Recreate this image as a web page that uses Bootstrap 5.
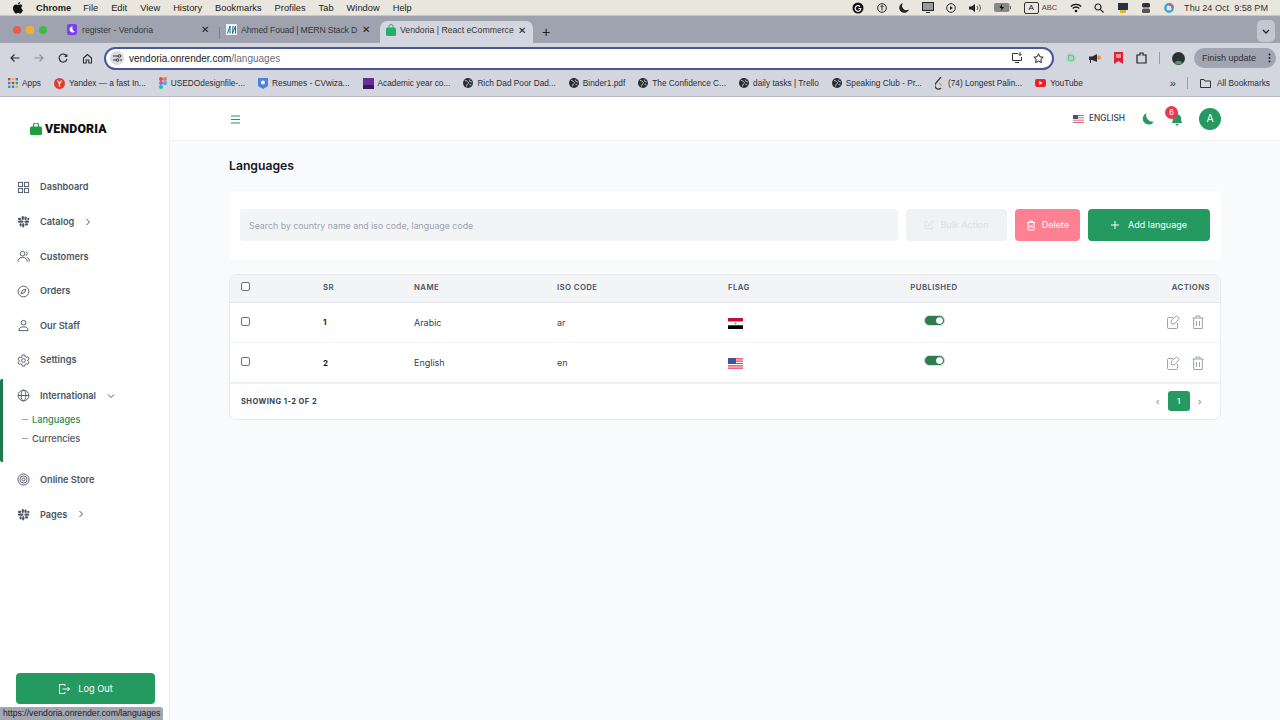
<!DOCTYPE html>
<html lang="en">
<head>
<meta charset="utf-8">
<title>Vendoria | React eCommerce</title>
<link href="https://cdn.jsdelivr.net/npm/bootstrap@5.3.0/dist/css/bootstrap.min.css" rel="stylesheet">
<style>
html,body{height:720px;overflow:hidden}
body{font-family:"Inter","Liberation Sans",sans-serif;background:#f9fafb;color:#111827;position:relative}
svg{display:block;flex:none}
.mac-bar{height:16px;background:#e9e7dd;font:9.3px "Liberation Sans",sans-serif;color:#222;padding:0 12px 0 13px;border-bottom:1px solid #c9c8c0}
.mac-menu{gap:13px;margin-left:13px}
.mac-menu b{margin-right:-1px}
.mac-status{gap:12.5px}
.mac-clock{font-size:9.1px;color:#333;margin-left:-2px}
.tab-strip{height:27px;background:#9fa3af;font:8.7px "Liberation Sans",sans-serif;color:#33363c;padding-top:5px}
.lights{gap:5px;padding:0 0 0 13px;width:61px;align-self:center;margin-top:-4px}
.light{width:8px;height:8px;border-radius:50%}
.chrome-tab{height:22px;padding:0 3px 5px 6px;width:152px}
.chrome-tab.tab-two{width:160px;padding:0 9px 5px 6px}
.chrome-tab.tab-on{background:#d4d6df;border-radius:7px 7px 0 0;width:153px;height:22px;padding:0 6px 4px 6px}
.tab-label{margin-left:5px;white-space:nowrap;overflow:hidden;flex:1}
.tab-two .tab-label{margin-left:4px;letter-spacing:-.15px}
.tab-on .tab-label{margin-left:4px}
.tab-x{font-size:10px;color:#222;margin-left:3px;width:10px;text-align:center}
.tab-sep{width:1px;height:12px;background:#7f838d;margin:0 0 4px 6px}
.tool-row{height:27px;background:#d4d6df;padding:3px 0 0 10px}
.nav-glyphs{gap:14px;width:94px;color:#2c2e33;flex-shrink:0}
.addr{width:950px;height:23px;background:#fff;border:2px solid #4a5796;border-radius:12px;font:10px "Liberation Sans",sans-serif;color:#222;padding:0 6px 0 4px}
.addr-site{width:14px;height:14px;background:#d8dae3;border-radius:50%;margin-right:5px}
.addr span.path{color:#6b6e76}
.ext-row{gap:12px;margin-left:11px;flex:1;min-width:0}
.finish{margin-left:-3px;background:#a0a5b1;border-radius:11px;height:20px;padding:0 5px 0 8px;font:9px "Liberation Sans",sans-serif;color:#2d2f35;width:82px;flex-shrink:0}
.mark-row{height:27px;background:#d4d6df;border-bottom:1px solid #b9bbc4;padding:0 10px 0 8px;font:8.3px "Liberation Sans",sans-serif;color:#2a2c31}
.mark-list{gap:13px}
.mark-item{gap:4px;white-space:nowrap}
.app-shell{height:623px}
.side-panel{width:170px;flex:none;background:#fff;border-right:1px solid #f1f2f4;position:relative}
.logo-wrap{height:64px;padding:0 0 0 30px;margin-bottom:9px}
.logo-text{font-family:"Roboto","Liberation Sans",sans-serif;font-weight:900;font-size:12.3px;letter-spacing:.2px;color:#111;margin-left:3px}
.side-link{height:34.6px;padding-left:17px;font-size:9.2px;font-weight:600;color:#4b5563;gap:10px;text-decoration:none}
.side-link svg.side-ico{width:13px;height:13px}
.side-link.has-arrow{gap:0}
.side-link.has-arrow span{margin:0 11px 0 10px}
.side-group{border-left:3px solid #1c7a4d;border-radius:2px;margin:1px 0 1px;height:83px}
.side-group .side-link{padding-left:14px}
.sub-list{margin-top:-3px}
.sub-link{font-size:9.2px;font-weight:500;color:#4b5563;padding-left:19px;height:19px;gap:4px}
.sub-link.on{color:#1f8a55}
.sub-dash{width:6px;height:1px;background:#9ca3af}
.side-foot{margin-top:auto;padding:0 15px 16px 16px}
.logout-btn{height:31px;width:139px;background:#249a60;border:0;color:#fff;font-size:9.2px;font-weight:400;border-radius:4px;gap:8px}
.main-pane{min-width:0}
.top-strip{height:44px;background:#fff;border-bottom:1px solid #f0f1f3;padding:0 59px 0 60px}
.hamb{margin-top:1px}
.lang-pick{font-size:8.3px;color:#374151;font-weight:500;gap:5px;margin-right:17px}
.moon-ico{margin-top:1px}
.bell-wrap{position:relative;margin:1px 16px 0 17px}
.bell-count{position:absolute;left:-6px;top:-7px;width:13px;height:13px;background:#e8394f;color:#fff;border-radius:50%;font-size:7.5px;font-weight:400;line-height:13px;text-align:center;padding:0}
.avatar-dot{width:22px;height:22px;background:#249a60;color:#fff;border-radius:50%;font-size:10.5px;font-weight:400}
.body-pane{padding:0 59px 0 59px}
.page-title{font-size:12.2px;font-weight:600;margin:0;line-height:16px;padding:17px 0 17px;color:#111827}
.filter-card{height:69px;background:#fff;border-radius:6px;padding:0 11px 1px 11px;gap:8px;margin-bottom:14px}
.filter-input{flex:1;height:32px;background:#f3f4f6;border:0;border-radius:4px;font-size:8.8px;color:#374151;padding:0 9px;box-shadow:none}
.filter-input::placeholder{color:#9ca3af}
.act-btn{height:32px;border-radius:4px;border:0;font-size:9px;font-weight:400;gap:6px;padding:0;color:#fff}
.act-bulk,.act-bulk:disabled{width:101px;background:#f1f2f4;color:#dcdee2;opacity:1}
.act-del{width:65px;background:#fd8093}
.act-add{width:122px;background:#249a60;gap:9px}
.data-box{background:#fff;border:1px solid #e8eaed;border-radius:7px;overflow:hidden;height:146px}
.lang-table{margin:0;table-layout:fixed;width:990px;font-size:9px;color:#374151}
.lang-table th,.lang-table td{vertical-align:middle;padding:0 11px;border-bottom:1px solid #f1f2f4;background:transparent;box-shadow:none}
.lang-table thead th{height:27px;background:#f3f4f6;border-bottom:1px solid #e5e7eb;font-size:7.8px;font-weight:600;letter-spacing:.4px;color:#4b5563;padding-bottom:1px}
.lang-table thead th:last-child{padding-right:10px}
.lang-table tbody td{height:40.5px}
.lang-table tbody tr:last-child td{border-bottom:2px solid #eff0f2}
.lang-table .sr-num{font-weight:700;font-size:8px;color:#111827}
.flag-ico{margin-top:2px}
.mini-check.form-check-input{width:9px;height:9px;margin:0;border:1px solid #6b7280;border-radius:2px;display:block;background-color:#fff;margin-top:-2px}
.mini-switch.form-check-input{width:21px;height:11px;margin:0 auto;display:block;float:none;background-color:#2f7d4f;border-color:#cfe3d6;margin-top:-4px}
.form-switch{padding:0;min-height:0;margin:0}
.form-switch .mini-switch.form-check-input{margin-left:auto}
.row-tools{gap:12px;margin-right:-5px;padding-right:10px}
.table-foot{height:35px;padding:0 10px 1px 11px;font-size:7.5px;font-weight:700;letter-spacing:.45px;color:#374151}
.foot-count{margin-top:2px}
.page-one{width:22px;height:20px;background:#249a60;border-radius:3px;color:#fff;font-size:8px;font-weight:500}
.page-arrow{color:#9ca3af;font-size:9px;width:20px;text-align:center;line-height:1}
.status-tip{position:absolute;left:0;bottom:0;height:13px;width:163px;background:#a3a7b2;border-radius:0 3px 0 0;font:8.7px "Liberation Sans",sans-serif;color:#17181b;padding:0 3px;line-height:13px;white-space:nowrap}
</style>
</head>
<body>
<svg width="0" height="0" style="position:absolute"><defs>
<symbol id="globe" viewBox="0 0 10 10"><circle cx="5" cy="5" r="5" fill="#2a2c31"/><path d="M2 2.500c1.500 0 2 .8 3 1.500s.5 1.500-.5 2-.5 2-1 2.500M7 1.500c-.5 1-1 1.500 0 2s1.800.5 2 .5M6.500 6.500c1-.5 1.500 0 1.500 1" fill="none" stroke="#d4d6df" stroke-width=".9"/></symbol>
<symbol id="slackish" viewBox="0 0 14 14"><g fill="#4b5563"><rect x="5" y="1" width="2.400" height="4.400" rx="1.200"/><rect x="1" y="3" width="3.400" height="2.400" rx="1.200"/><rect x="8" y="1.500" width="2.400" height="3.900" rx="1.200"/><rect x="8" y="6" width="5" height="2.400" rx="1.200"/><rect x="11" y="3" width="2.400" height="2.400" rx="1.200"/><rect x="5.500" y="9" width="2.400" height="4.400" rx="1.200"/><rect x="8.500" y="9" width="3.400" height="2.400" rx="1.200"/><rect x="1" y="6" width="6" height="2.400" rx="1.200"/><rect x="2.800" y="9" width="2.200" height="3.400" rx="1.100"/></g></symbol>
<symbol id="edit-ico" viewBox="0 0 14 14"><path fill="none" stroke="#9ca3af" d="M11.500 8v4.500a1 1 0 0 1-1 1h-8a1 1 0 0 1-1-1v-9a1 1 0 0 1 1-1H7M5 7.500l.5-2.500L10.700.8l2.500 2.500L9 8.500l-3 .5z"/></symbol>
<symbol id="trash-ico" viewBox="0 0 12 14"><path fill="none" stroke="#9ca3af" d="M.5 3h11M4 3V1h4v2M1.700 3v10.500h8.600V3M4.500 6v5M7.500 6v5"/></symbol>
</defs></svg>
<div class="mac-bar d-flex align-items-center justify-content-between">
  <div class="d-flex align-items-center">
    <svg width="10" height="12" viewBox="0 0 10 12"><path fill="#111" d="M7.200 0c.1 1-.9 2.400-2.200 2.400C4.900 1.200 6 .1 7.200 0zM5 3c.6 0 1.300-.5 2.300-.5.800 0 1.700.4 2.200 1.200-1.800 1-1.500 3.600.5 4.300C9.400 9.500 8.400 11.600 7.200 11.600c-.8 0-1-.5-2-.5s-1.300.5-2 .5C1.800 11.600 0 8.800 0 6.300 0 3.900 1.500 2.600 3 2.600c.8 0 1.500.4 2 .4z"/></svg>
    <div class="d-flex mac-menu"><b>Chrome</b><span>File</span><span>Edit</span><span>View</span><span>History</span><span>Bookmarks</span><span>Profiles</span><span>Tab</span><span>Window</span><span>Help</span></div>
  </div>
  <div class="d-flex align-items-center mac-status">
    <svg width="12" height="12" viewBox="0 0 12 12"><circle cx="6" cy="6" r="5.500" fill="#111"/><path d="M8 4.500A2.800 2.800 0 1 0 8.800 6.500H6.500" fill="none" stroke="#fff" stroke-width="1.200"/></svg>
    <svg width="10" height="10" viewBox="0 0 10 10"><circle cx="5" cy="5" r="4.300" fill="none" stroke="#222"/><path d="M5 2.500v5M3.500 4L5 2.500 6.500 4" fill="none" stroke="#222"/></svg>
    <svg width="10" height="10" viewBox="0 0 10 10"><path fill="#222" d="M4 0a5 5 0 1 0 6 6.500A4.500 4.500 0 0 1 4 0z"/></svg>
    <svg width="12" height="11" viewBox="0 0 12 11"><rect x=".5" y=".5" width="11" height="8" fill="#999" stroke="#222"/><path d="M4 10.500h4" stroke="#222"/></svg>
    <svg width="10" height="10" viewBox="0 0 10 10"><circle cx="5" cy="5" r="4.300" fill="none" stroke="#222"/><path d="M4 3l3 2-3 2z" fill="#222"/></svg>
    <svg width="13" height="10" viewBox="0 0 13 10"><path d="M0 3.500h2.500L6 1v8L2.500 6.500H0z" fill="#222"/><path d="M8 3a3 3 0 0 1 0 4M10 1.500a5 5 0 0 1 0 7" fill="none" stroke="#555"/></svg>
    <svg width="17" height="9" viewBox="0 0 17 9"><rect width="15.500" height="9" rx="2" fill="#888"/><rect x="16" y="3" width="1" height="3" fill="#666"/><path d="M8 1L5.500 5h2L7 8l3-4H8z" fill="#111"/></svg>
    <span class="d-flex align-items-center" style="gap:3px;font-size:7.5px;color:#444"><span style="border:1px solid #333;border-radius:2px;width:15px;height:12px;line-height:10px;text-align:center;font-size:8px;color:#111">A</span>ABC</span>
    <svg width="12" height="10" viewBox="0 0 12 10"><path d="M.8 3.500a7.500 7.500 0 0 1 10.400 0M2.700 5.500a5 5 0 0 1 6.600 0" fill="none" stroke="#111" stroke-width="1.300"/><circle cx="6" cy="8" r="1.300" fill="#111"/></svg>
    <svg width="10" height="10" viewBox="0 0 10 10"><circle cx="4" cy="4" r="3" fill="none" stroke="#222" stroke-width="1.200"/><path d="M6.300 6.300L9.500 9.500" stroke="#222" stroke-width="1.200"/></svg>
    <svg width="12" height="12" viewBox="0 0 12 12"><path d="M1 1h10v7H1z" fill="#234"/><path d="M3 8h6v3H3z" fill="#e3b52a"/></svg>
    <svg width="10" height="12" viewBox="0 0 10 12"><rect x="1" y="1" width="8" height="4.500" rx="1.500" fill="#333"/><rect x="1" y="6.500" width="8" height="4.500" rx="1.500" fill="#555"/></svg>
    <svg width="10" height="10" viewBox="0 0 10 10"><circle cx="5" cy="5" r="3.700" fill="none" stroke="#3fa4d8" stroke-width="2.400"/><path d="M5 1.300a3.700 3.700 0 0 1 3.700 3.700" fill="none" stroke="#d64b9f" stroke-width="2.400"/></svg>
    <span class="mac-clock">Thu 24 Oct&nbsp; 9:58 PM</span>
  </div>
</div>

<div class="tab-strip d-flex align-items-end">
  <div class="d-flex lights"><span class="light" style="background:#ee5a52"></span><span class="light" style="background:#f4b22c"></span><span class="light" style="background:#3cbc45"></span></div>
  <div class="chrome-tab d-flex align-items-center">
    <svg width="10" height="11" viewBox="0 0 10 11"><rect width="10" height="11" rx="2" fill="#7b3ff2"/><path d="M5.800 2.500a3 3 0 1 0 2 5 3.500 3.500 0 0 1-2-5z" fill="#fff"/></svg>
    <span class="tab-label">register - Vendoria</span><span class="tab-x">✕</span>
  </div>
  <div class="tab-sep"></div>
  <div class="chrome-tab tab-two d-flex align-items-center">
    <svg width="11" height="11" viewBox="0 0 11 11"><rect width="11" height="11" fill="#eef3f5"/><path d="M1.500 9.500L4 2v7.500M7 2l-.5 7.500L9.500 2v7.500" fill="none" stroke="#27708f"/></svg>
    <span class="tab-label">Ahmed Fouad | MERN Stack D</span><span class="tab-x">✕</span>
  </div>
  <div class="chrome-tab tab-on d-flex align-items-center">
    <svg width="10" height="12" viewBox="0 0 10 12"><path d="M3 4V2.500a2 2 0 0 1 4 0V4" fill="none" stroke="#25b06a"/><rect y="3.500" width="10" height="8.500" rx="1.500" fill="#25b06a"/></svg>
    <span class="tab-label">Vendoria | React eCommerce</span><span class="tab-x">✕</span>
  </div>
  <span style="font-size:14px;line-height:14px;margin:0 0 4px 9px;color:#222">+</span>
  <span class="d-flex align-items-center justify-content-center ms-auto" style="width:18px;height:22px;background:#c4c7d1;border-radius:5px;margin:0 5px 1px 0"><svg width="8" height="5" viewBox="0 0 8 5"><path d="M1 1l3 3 3-3" fill="none" stroke="#222" stroke-width="1.300"/></svg></span>
</div>

<div class="tool-row d-flex align-items-center">
  <div class="d-flex align-items-center nav-glyphs">
    <svg width="10" height="10" viewBox="0 0 10 10"><path d="M9.500 5H1M4.500 1.500L1 5l3.500 3.500" fill="none" stroke="#2c2e33" stroke-width="1.200"/></svg>
    <svg width="10" height="10" viewBox="0 0 10 10"><path d="M.5 5H9M5.500 1.500L9 5 5.500 8.500" fill="none" stroke="#8c8f98" stroke-width="1.200"/></svg>
    <svg width="10" height="10" viewBox="0 0 10 10"><path d="M8.700 3.200A4 4 0 1 0 9 6" fill="none" stroke="#2c2e33" stroke-width="1.200"/><path d="M9.300 .7v3.200H6.100z" fill="#2c2e33"/></svg>
    <svg width="11" height="11" viewBox="0 0 11 11"><path d="M1.500 5L5.500 1.500 9.500 5v5H6.800V7H4.200v3H1.500z" fill="none" stroke="#2c2e33" stroke-width="1.100"/></svg>
  </div>
  <div class="addr d-flex align-items-center flex-shrink-0">
    <span class="addr-site d-flex align-items-center justify-content-center"><svg width="9" height="8" viewBox="0 0 9 8"><path d="M0 2h5M7 6h2M0 6h3" stroke="#333"/><circle cx="6.500" cy="2" r="1.300" fill="none" stroke="#333"/><circle cx="4.500" cy="6" r="1.300" fill="none" stroke="#333"/></svg></span>
    <span>vendoria.onrender.com<span class="path">/languages</span></span>
    <svg class="ms-auto" width="12" height="12" viewBox="0 0 12 12"><path d="M7 1.500H1.500v7h9V5M4 10.500h4" fill="none" stroke="#333"/><path d="M9 0v3.500M7.500 2L9 3.500 10.500 2" fill="none" stroke="#333"/></svg>
    <svg style="margin:0 2px 0 10px" width="11" height="11" viewBox="0 0 11 11"><path d="M5.500.8l1.400 3 3.300.4-2.400 2.200.6 3.300-2.900-1.600-2.900 1.600.6-3.300L.8 4.200l3.300-.4z" fill="none" stroke="#222"/></svg>
  </div>
  <div class="d-flex align-items-center ext-row">
    <svg width="12" height="12" viewBox="0 0 12 12"><circle cx="6" cy="6" r="5" fill="#a7dcc0"/><circle cx="6" cy="6" r="2.800" fill="none" stroke="#6dbf95"/><circle cx="4" cy="3.500" r="1" fill="#e58a7e"/></svg>
    <svg width="12" height="11" viewBox="0 0 12 11"><path d="M0 3.500h3L8 1v8L3 7H2v3H1V7H0z" fill="#2c2e33"/><path d="M8.500 2.500h3v4h-3z" fill="#f08a3c"/></svg>
    <svg width="11" height="13" viewBox="0 0 11 13"><path d="M1 0h9v12L5.500 9 1 12z" fill="#e0202f"/><path d="M3 3h5M3 5h5" stroke="#fff"/></svg>
    <svg width="11" height="12" viewBox="0 0 11 12"><path d="M1 3h3V1h3v2h3v8H1z" fill="none" stroke="#222" stroke-width="1.200"/></svg>
    <span style="width:1px;height:12px;background:#9a9ca5"></span>
    <svg width="13" height="13" viewBox="0 0 13 13"><circle cx="6.500" cy="6.500" r="6.500" fill="#2a3136"/><path d="M2.500 11a4.500 4 0 0 1 8 0 6.500 6.500 0 0 1-8 0z" fill="#4e9a55"/></svg>
    <div class="finish d-flex align-items-center justify-content-between"><span>Finish update</span><svg width="3" height="10" viewBox="0 0 3 10"><circle cx="1.500" cy="1.500" r="1" fill="#222"/><circle cx="1.500" cy="5" r="1" fill="#222"/><circle cx="1.500" cy="8.500" r="1" fill="#222"/></svg></div>
  </div>
</div>

<div class="mark-row d-flex align-items-center justify-content-between">
  <div class="d-flex align-items-center mark-list">
    <span class="d-flex align-items-center mark-item"><svg width="10" height="10" viewBox="0 0 10 10"><g><rect width="2.400" height="2.400" fill="#d93a2f"/><rect x="3.800" width="2.400" height="2.400" fill="#e8b62c"/><rect x="7.600" width="2.400" height="2.400" fill="#3a7de0"/><rect y="3.800" width="2.400" height="2.400" fill="#3a7de0"/><rect x="3.800" y="3.800" width="2.400" height="2.400" fill="#d93a2f"/><rect x="7.600" y="3.800" width="2.400" height="2.400" fill="#38a852"/><rect y="7.600" width="2.400" height="2.400" fill="#38a852"/><rect x="3.800" y="7.600" width="2.400" height="2.400" fill="#3a7de0"/><rect x="7.600" y="7.600" width="2.400" height="2.400" fill="#e8b62c"/></g></svg>Apps</span>
    <span class="d-flex align-items-center mark-item"><svg width="11" height="11" viewBox="0 0 11 11"><circle cx="5.500" cy="5.500" r="5.500" fill="#e33b2e"/><path d="M3.500 2.500l2 3.200 2-3.200M5.500 5.700v3" fill="none" stroke="#fff" stroke-width="1.100"/></svg>Yandex — a fast In...</span>
    <span class="d-flex align-items-center mark-item"><svg width="8" height="12" viewBox="0 0 8 12"><circle cx="2" cy="2" r="2" fill="#f24e1e"/><circle cx="6" cy="2" r="2" fill="#ff7262"/><circle cx="2" cy="6" r="2" fill="#a259ff"/><circle cx="6" cy="6" r="2" fill="#1abcfe"/><circle cx="2" cy="10" r="2" fill="#0acf83"/></svg>USEDOdesignfile-...</span>
    <span class="d-flex align-items-center mark-item"><svg width="10" height="12" viewBox="0 0 10 12"><path d="M0 1h10v8l-5 3-5-3z" fill="#4d84db"/><circle cx="5" cy="5.500" r="2" fill="#fff"/></svg>Resumes - CVwiza...</span>
    <span class="d-flex align-items-center mark-item"><svg width="11" height="11" viewBox="0 0 11 11"><rect width="11" height="11" fill="#6a2d91"/><rect y="7" width="11" height="4" fill="#3d1a5a"/></svg>Academic year co...</span>
    <span class="d-flex align-items-center mark-item"><svg width="10" height="10"><use href="#globe"/></svg>Rich Dad Poor Dad...</span>
    <span class="d-flex align-items-center mark-item"><svg width="10" height="10"><use href="#globe"/></svg>Binder1.pdf</span>
    <span class="d-flex align-items-center mark-item"><svg width="10" height="10"><use href="#globe"/></svg>The Confidence C...</span>
    <span class="d-flex align-items-center mark-item"><svg width="10" height="10"><use href="#globe"/></svg>daily tasks | Trello</span>
    <span class="d-flex align-items-center mark-item"><svg width="10" height="10"><use href="#globe"/></svg>Speaking Club - Pr...</span>
    <span class="d-flex align-items-center mark-item"><svg width="9" height="13" viewBox="0 0 9 13"><path d="M6 0L1 6a3.500 3.500 0 0 0 5 5" fill="none" stroke="#333" stroke-width="1.200"/><path d="M4 6l3 2.500" stroke="#e8912c" stroke-width="1.200"/></svg>(74) Longest Palin...</span>
    <span class="d-flex align-items-center mark-item"><svg width="11" height="8" viewBox="0 0 11 8"><rect width="11" height="8" rx="2" fill="#f0202a"/><path d="M4.300 2l3 2-3 2z" fill="#fff"/></svg>YouTube</span>
  </div>
  <div class="d-flex align-items-center" style="gap:11px">
    <span style="font-size:11px;line-height:1">»</span>
    <span style="width:1px;height:12px;background:#9a9ca5;margin:0 1px 0 0"></span>
    <span class="d-flex align-items-center mark-item" style="gap:6px"><svg width="11" height="9" viewBox="0 0 11 9"><path d="M.5 8.500V.5h3.500l1 1.500h5.500v6.500z" fill="none" stroke="#333"/></svg>All Bookmarks</span>
  </div>
</div>

<div class="app-shell d-flex">
  <aside class="side-panel d-flex flex-column">
    <div class="logo-wrap d-flex align-items-center">
      <svg width="12" height="12" viewBox="0 0 12 12"><path d="M3.500 4V2.500a2.500 2.500 0 0 1 5 0V4" fill="none" stroke="#1f9d3f" stroke-width="1.200"/><rect y="3.500" width="12" height="8.500" rx="1.500" fill="#1f9d3f"/></svg>
      <span class="logo-text">VENDORIA</span>
    </div>
    <a class="side-link d-flex align-items-center"><svg class="side-ico" viewBox="0 0 14 14" fill="none" stroke="#4b5563"><rect x="1.500" y="1.500" width="4.500" height="4.500"/><rect x="8" y="1.500" width="4.500" height="4.500"/><rect x="1.500" y="8" width="4.500" height="4.500"/><rect x="8" y="8" width="4.500" height="4.500"/></svg>Dashboard</a>
    <a class="side-link has-arrow d-flex align-items-center"><svg class="side-ico"><use href="#slackish"/></svg><span>Catalog</span><svg width="6" height="8" viewBox="0 0 6 8"><path d="M1.500 1l3 3-3 3" fill="none" stroke="#4b5563"/></svg></a>
    <a class="side-link d-flex align-items-center"><svg class="side-ico" viewBox="0 0 14 14" fill="none" stroke="#4b5563"><circle cx="6" cy="4" r="2.500"/><path d="M1 12.500c0-3 2-4.500 5-4.500s5 1.500 5 4.500M9.500 1.700a2.500 2.500 0 0 1 0 4.600M11 8.200c1.400.6 2.300 2 2.300 4.300"/></svg>Customers</a>
    <a class="side-link d-flex align-items-center"><svg class="side-ico" viewBox="0 0 14 14" fill="none" stroke="#4b5563"><circle cx="7" cy="7" r="5.800"/><path d="M9.500 4.500L8.200 8.200 4.500 9.500 5.800 5.800z"/></svg>Orders</a>
    <a class="side-link d-flex align-items-center"><svg class="side-ico" viewBox="0 0 14 14" fill="none" stroke="#4b5563"><circle cx="7" cy="4" r="2.500"/><path d="M2 12.500c0-3 2-4 5-4s5 1 5 4z"/></svg>Our Staff</a>
    <a class="side-link d-flex align-items-center"><svg class="side-ico" viewBox="0 0 14 14" fill="none" stroke="#4b5563"><circle cx="7" cy="7" r="2"/><path d="M5.700 1h2.600l.4 1.800 1.300.7 1.700-.6 1.300 2.300-1.300 1.200v1.200l1.300 1.200-1.300 2.300-1.700-.6-1.300.7-.4 1.800H5.700l-.4-1.800-1.300-.7-1.700.6L1 9.300l1.300-1.200V6.900L1 5.700l1.300-2.300 1.700.6 1.300-.7z"/></svg>Settings</a>
    <div class="side-group">
      <a class="side-link has-arrow d-flex align-items-center"><svg class="side-ico" viewBox="0 0 14 14" fill="none" stroke="#4b5563"><circle cx="7" cy="7" r="5.800"/><ellipse cx="7" cy="7" rx="2.500" ry="5.800"/><path d="M1.200 7h11.600"/></svg><span>International</span><svg width="8" height="6" viewBox="0 0 8 6"><path d="M1 1.500l3 3 3-3" fill="none" stroke="#4b5563"/></svg></a>
      <div class="sub-list">
        <div class="sub-link on d-flex align-items-center"><span class="sub-dash"></span>Languages</div>
        <div class="sub-link d-flex align-items-center"><span class="sub-dash"></span>Currencies</div>
      </div>
    </div>
    <a class="side-link d-flex align-items-center"><svg class="side-ico" viewBox="0 0 14 14" fill="none" stroke="#4b5563"><circle cx="7" cy="7" r="6"/><circle cx="7" cy="7" r="3.800"/><circle cx="7" cy="7" r="1.600"/></svg>Online Store</a>
    <a class="side-link has-arrow d-flex align-items-center"><svg class="side-ico"><use href="#slackish"/></svg><span>Pages</span><svg width="6" height="8" viewBox="0 0 6 8"><path d="M1.500 1l3 3-3 3" fill="none" stroke="#4b5563"/></svg></a>
    <div class="side-foot">
      <button type="button" class="btn logout-btn d-flex align-items-center justify-content-center"><svg width="12" height="12" viewBox="0 0 12 12" fill="none" stroke="#fff"><path d="M7 3V1.500H1.500v9H7V9M4.500 6h7M9.500 4l2 2-2 2"/></svg>Log Out</button>
    </div>
  </aside>
  <main class="main-pane flex-grow-1 d-flex flex-column">
    <div class="top-strip d-flex align-items-center">
      <svg class="hamb" width="11" height="9" viewBox="0 0 11 9"><path d="M1 1h9M1 4.500h9M1 8h9" stroke="#249a60" stroke-width="1.200"/></svg>
      <div class="ms-auto d-flex align-items-center">
        <span class="d-flex align-items-center lang-pick"><svg width="11" height="8" viewBox="0 0 11 8"><rect width="11" height="8" fill="#fff"/><path d="M0 .5h11M0 2.800h11M0 5.200h11M0 7.500h11" stroke="#d96a78"/><rect width="5" height="4" fill="#474f86"/></svg>ENGLISH</span>
        <svg class="moon-ico" width="12" height="12" viewBox="0 0 12 12"><path fill="#249a60" d="M4.500 0a6 6 0 1 0 7.500 8.500A6.500 6.500 0 0 1 4.500 0z"/></svg>
        <span class="bell-wrap"><svg width="12" height="13" viewBox="0 0 12 13"><path fill="#249a60" d="M6 0a1 1 0 0 1 1 1v.6A4 4 0 0 1 10 5.500c0 3 .8 3.800 1.500 4.500H.5C1.200 9.300 2 8.500 2 5.500A4 4 0 0 1 5 1.600V1a1 1 0 0 1 1-1zM4.500 11h3a1.500 1.500 0 0 1-3 0z"/></svg><span class="bell-count badge">6</span></span>
        <span class="avatar-dot d-flex align-items-center justify-content-center">A</span>
      </div>
    </div>
    <div class="body-pane">
      <h1 class="page-title">Languages</h1>
      <div class="filter-card d-flex align-items-center">
        <input class="form-control filter-input" type="text" placeholder="Search by country name and iso code, language code">
        <button type="button" class="btn act-btn act-bulk d-flex align-items-center justify-content-center" disabled><svg width="10" height="10" viewBox="0 0 12 12" fill="none" stroke="#dcdee2"><path d="M10 7v3.500H1.500V2H5M4.500 7.500l.4-2L10 .8l1.200 1.200-5 5z"/></svg>Bulk Action</button>
        <button type="button" class="btn act-btn act-del d-flex align-items-center justify-content-center"><svg width="10" height="11" viewBox="0 0 10 11" fill="none" stroke="#fff"><path d="M1 2.500h8M3.500 2.500V1h3v1.500M2 2.500V10h6V2.500M4 5v3M6 5v3"/></svg>Delete</button>
        <button type="button" class="btn act-btn act-add d-flex align-items-center justify-content-center"><svg width="8" height="8" viewBox="0 0 8 8"><path d="M4 0v8M0 4h8" stroke="#fff"/></svg>Add language</button>
      </div>
      <div class="data-box">
        <table class="table lang-table">
          <colgroup><col style="width:82px"><col style="width:91px"><col style="width:143px"><col style="width:171px"><col style="width:182px"><col style="width:70px"><col></colgroup>
          <thead><tr><th><input class="form-check-input mini-check" type="checkbox" aria-label="Select all"></th><th>SR</th><th>NAME</th><th>ISO CODE</th><th>FLAG</th><th class="text-center text-nowrap px-0">PUBLISHED</th><th class="text-end">ACTIONS</th></tr></thead>
          <tbody>
            <tr><td><input class="form-check-input mini-check" type="checkbox" aria-label="Select Arabic"></td><td class="sr-num">1</td><td>Arabic</td><td>ar</td>
              <td><svg class="flag-ico" width="15" height="11" viewBox="0 0 15 11"><rect width="15" height="3.700" fill="#c8102e"/><rect y="3.700" width="15" height="3.600" fill="#fff"/><rect y="7.300" width="15" height="3.700" fill="#000"/><circle cx="7.500" cy="5.500" r="1" fill="#c09300"/></svg></td>
              <td><div class="form-check form-switch"><input class="form-check-input mini-switch" type="checkbox" role="switch" checked aria-label="Published"></div></td>
              <td><div class="d-flex justify-content-end row-tools"><svg width="14" height="14"><use href="#edit-ico"/></svg><svg width="12" height="14"><use href="#trash-ico"/></svg></div></td></tr>
            <tr><td><input class="form-check-input mini-check" type="checkbox" aria-label="Select English"></td><td class="sr-num">2</td><td>English</td><td>en</td>
              <td><svg class="flag-ico" width="15" height="11" viewBox="0 0 15 11"><rect width="15" height="11" fill="#fff"/><path d="M0 .8h15M0 3.200h15M0 5.500h15M0 7.800h15M0 10.200h15" stroke="#e8394f" stroke-width="1.200"/><rect width="8" height="6" fill="#474f96"/></svg></td>
              <td><div class="form-check form-switch"><input class="form-check-input mini-switch" type="checkbox" role="switch" checked aria-label="Published"></div></td>
              <td><div class="d-flex justify-content-end row-tools"><svg width="14" height="14"><use href="#edit-ico"/></svg><svg width="12" height="14"><use href="#trash-ico"/></svg></div></td></tr>
          </tbody>
        </table>
        <div class="table-foot d-flex align-items-center justify-content-between">
          <span class="foot-count">SHOWING 1-2 OF 2</span>
          <div class="d-flex align-items-center"><span class="page-arrow">‹</span><span class="page-one d-flex align-items-center justify-content-center">1</span><span class="page-arrow">›</span></div>
        </div>
      </div>
    </div>
  </main>
</div>
<div class="status-tip">https://vendoria.onrender.com/languages</div>
<script src="https://cdn.jsdelivr.net/npm/bootstrap@5.3.0/dist/js/bootstrap.bundle.min.js"></script>
</body>
</html>
